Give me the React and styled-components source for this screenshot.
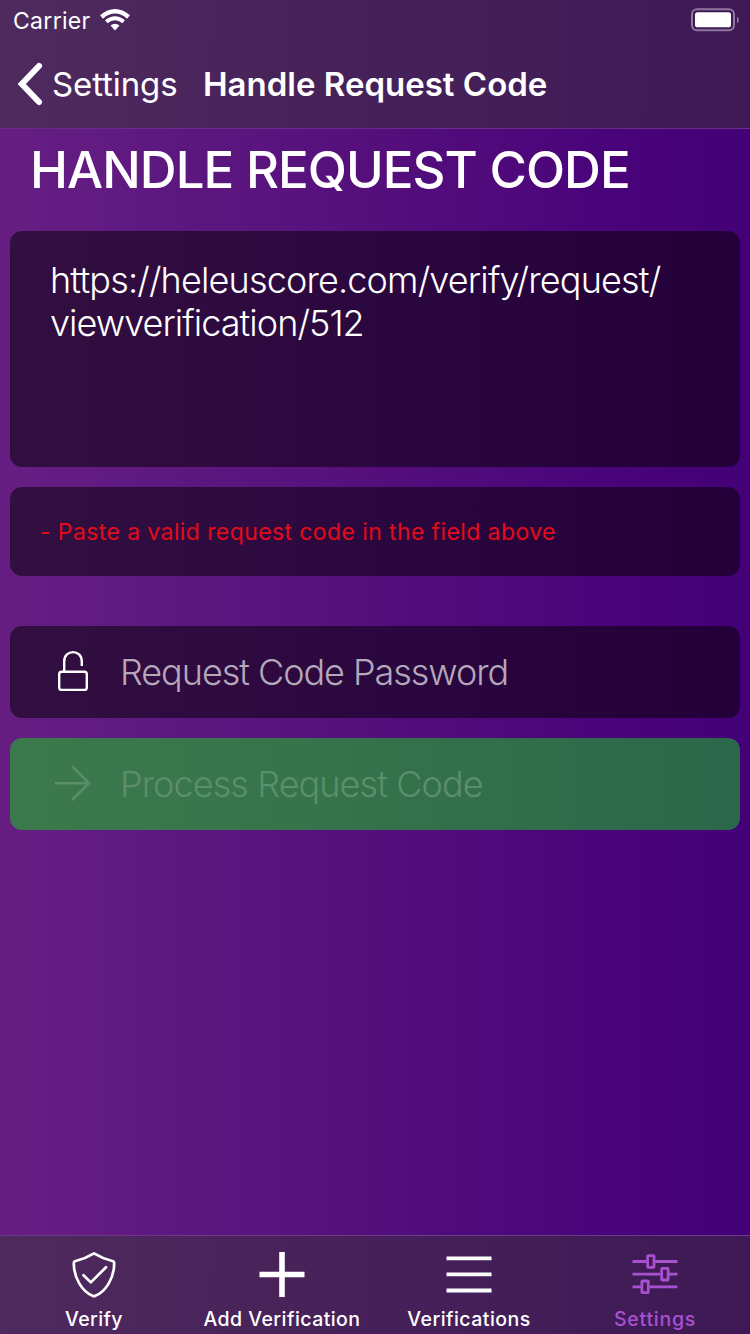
import React from 'react';
import styled, { createGlobalStyle } from 'styled-components';

const GlobalStyle = createGlobalStyle`
  * { box-sizing: border-box; }
  body { margin: 0; background: #54107c; }
`;

const Screen = styled.div`
  width: 750px;
  height: 1334px;
  display: flex;
  flex-direction: column;
  overflow: hidden;
  color: #fff;
  font-family: Inter, 'Liberation Sans', sans-serif;
  background: linear-gradient(90deg, #661e83 0%, #5e1980 20%, #540f7c 50%, #4a047a 80%, #440077 100%);
`;

const Header = styled.header`
  height: 129px;
  flex: none;
  border-bottom: 1px solid #6a2c8c;
  background: linear-gradient(92deg, #4e2a5e 0%, #462159 50%, #3d1955 100%);
`;

const StatusBar = styled.div`
  height: 40px;
  display: flex;
  align-items: center;
  padding: 0 11px 0 13px;
`;

const Text = styled.span`
  display: block;
  white-space: nowrap;
  font-size: ${(p) => p.$size}px;
  font-weight: ${(p) => p.$weight || 400};
  letter-spacing: ${(p) => p.$track || 0}px;
  line-height: ${(p) => p.$line || 40}px;
`;

const CarrierText = styled(Text)`
  padding-top: 2px;
`;

const WifiIcon = styled.svg`
  margin-left: 8px;
  margin-right: auto;
`;

const NavBar = styled.div`
  height: 88px;
  display: flex;
  align-items: center;
  padding-left: 16px;
`;

const BackButton = styled.div`
  width: 187px;
  display: flex;
  align-items: center;
  gap: 8px;
`;

const Content = styled.main`
  flex: 1;
  display: flex;
  flex-direction: column;
  padding: 0 10px;
`;

const Title = styled.h1`
  margin: 0;
  height: 102px;
  padding-left: 20px;
  font-size: 51px;
  font-weight: 500;
  line-height: 82px;
  letter-spacing: -0.97px;
  white-space: nowrap;
`;

const Card = styled.div`
  height: ${(p) => p.$height}px;
  margin-bottom: ${(p) => p.$after || 0}px;
  padding: ${(p) => p.$pad || '0'};
  border-radius: 12px;
  background: linear-gradient(90deg, #320f40, #2b073f 50%, #24003a);
`;

const ErrorText = styled(Text)`
  color: #e30c18;
`;

const ActionRow = styled(Card)`
  display: flex;
  align-items: center;
  gap: 27px;
  padding: 0 0 0 42px;
  color: ${(p) => p.$color};
  ${(p) => p.$green && 'background: linear-gradient(90deg, #3c7a4d, #34724b 50%, #2b674a);'}
`;

const ActionLabel = styled(Text)`
  padding-bottom: 1px;
`;

const TabBar = styled.nav`
  height: 99px;
  display: grid;
  grid-template-columns: 188px 188px 186px 186px;
  border-top: 1px solid #6a3a88;
  background: linear-gradient(91deg, #4e2a5e 0%, #462159 50%, #3d1955 100%);
`;

const Tab = styled.div`
  display: flex;
  flex-direction: column;
  align-items: center;
  padding-top: 14px;
  color: ${(p) => (p.$active ? '#a950d0' : '#fff')};
`;

const TabIcon = styled.svg`
  display: block;
  flex: none;
`;

const tabs = [
  {
    label: 'Verify',
    track: 0.4,
    icon: (
      <g fill="none" stroke="currentColor" strokeWidth="2.7" strokeLinejoin="round" strokeLinecap="round">
        <path d="M24 3.3C30 7 37 9.7 43 11.2Q44.2 11.6 44.2 13C44.2 28 36 41.5 25.4 45.800Q24 46.500 22.600 45.800C12 41.500 3.800 28 3.800 13Q3.800 11.600 5 11.200C11 9.700 18 7 24 3.300Z" />
        <path d="M13.500 25.300L20.800 32.400L36 17.200" />
      </g>
    ),
  },
  {
    label: 'Add Verification',
    track: 0.45,
    icon: <path d="M24 2V47M1.500 24.500H46.500" stroke="currentColor" strokeWidth="5.6" />,
  },
  {
    label: 'Verifications',
    track: 0.47,
    icon: <path d="M1.500 8.300H46.500M1.500 24.300H46.500M1.500 40.500H46.500" stroke="currentColor" strokeWidth="3.8" />,
  },
  {
    label: 'Settings',
    track: 0.75,
    active: true,
    icon: (
      <g fill="none" stroke="currentColor" strokeWidth="2.8" strokeLinejoin="round">
        <path d="M1.500 11.500H15.500M24 11.500H46.500M1.500 24.200H29.500M38 24.200H46.500M1.500 36.800H10M18.500 36.800H46.500" />
        <rect x="16.600" y="5.700" width="6.400" height="11.600" rx="0.6" />
        <rect x="30.700" y="18.400" width="6.400" height="11.600" rx="0.6" />
        <rect x="10.900" y="31" width="6.400" height="11.600" rx="0.6" />
      </g>
    ),
  },
];

export default function App() {
  return (
    <Screen>
      <GlobalStyle />
      <Header>
        <StatusBar>
          <CarrierText $size={23} $track={0.3}>Carrier</CarrierText>
          <WifiIcon width="32" height="24" viewBox="0 0 32 24" fill="none" stroke="#fff">
            <path d="M2.500 9Q16 -2.400 29.500 9" strokeWidth="4.400" />
            <path d="M7.300 13.800Q16 6.800 24.700 13.800" strokeWidth="4" />
            <path d="M11.500 17.400Q16 14.200 20.500 17.400L16 22.600Z" fill="#fff" stroke="none" />
          </WifiIcon>
          <svg width="48" height="24" viewBox="0 0 48 24">
            <rect x="1" y="1.300" width="42" height="21" rx="5" fill="none" stroke="#8e76a0" strokeWidth="2" />
            <rect x="4" y="4.300" width="36" height="15" rx="2.600" fill="#fff" />
            <path d="M46 8.500Q48 9.500 48 12T46 15.500Z" fill="#8e76a0" />
          </svg>
        </StatusBar>
        <NavBar>
          <BackButton>
            <svg width="28" height="44" viewBox="0 0 28 44" fill="none" stroke="#fff" strokeWidth="6" strokeLinecap="round" strokeLinejoin="miter">
              <path d="M23 4L5.800 22L23 40" />
            </svg>
            <Text $size={33} $track={-0.1}>Settings</Text>
          </BackButton>
          <Text $size={33} $weight={600} $track={0}>Handle Request Code</Text>
        </NavBar>
      </Header>
      <Content>
        <Title>HANDLE REQUEST CODE</Title>
        <Card $height={236} $after={20} $pad="28px 40px">
          <Text $size={36} $weight={300} $track={-0.84} $line={43}>https://heleuscore.com/verify/request/</Text>
          <Text $size={36} $weight={300} $track={-0.95} $line={43}>viewverification/512</Text>
        </Card>
        <Card $height={89} $after={50} $pad="25px 30px">
          <ErrorText $size={23} $track={0.4}>- Paste a valid request code in the field above</ErrorText>
        </Card>
        <ActionRow $height={92} $after={20} $color="#b4a8ba">
          <svg width="41" height="48" viewBox="0 0 41 48" fill="none" stroke="#fff" strokeWidth="2.400">
            <rect x="7.200" y="23.700" width="27.600" height="18.200" rx="2.500" />
            <path d="M12.200 23.500V13.500C12.200 1 29.800 1 29.800 13.500V18" />
          </svg>
          <ActionLabel $size={36} $weight={300} $track={-1.05}>Request Code Password</ActionLabel>
        </ActionRow>
        <ActionRow $height={92} $green $color="#5b8f6c">
          <svg width="41" height="48" viewBox="0 0 41 48" fill="none" stroke="currentColor" strokeWidth="2.400">
            <path d="M3 23.200H37M20 6.200L37 23.200L20 40.200" />
          </svg>
          <ActionLabel $size={36} $weight={300} $track={-0.92}>Process Request Code</ActionLabel>
        </ActionRow>
      </Content>
      <TabBar>
        {tabs.map((tab) => (
          <Tab key={tab.label} $active={tab.active}>
            <TabIcon width="48" height="49" viewBox="0 0 48 49">{tab.icon}</TabIcon>
            <Text $size={19.500} $weight={500} $track={tab.track} $line={40}>{tab.label}</Text>
          </Tab>
        ))}
      </TabBar>
    </Screen>
  );
}
